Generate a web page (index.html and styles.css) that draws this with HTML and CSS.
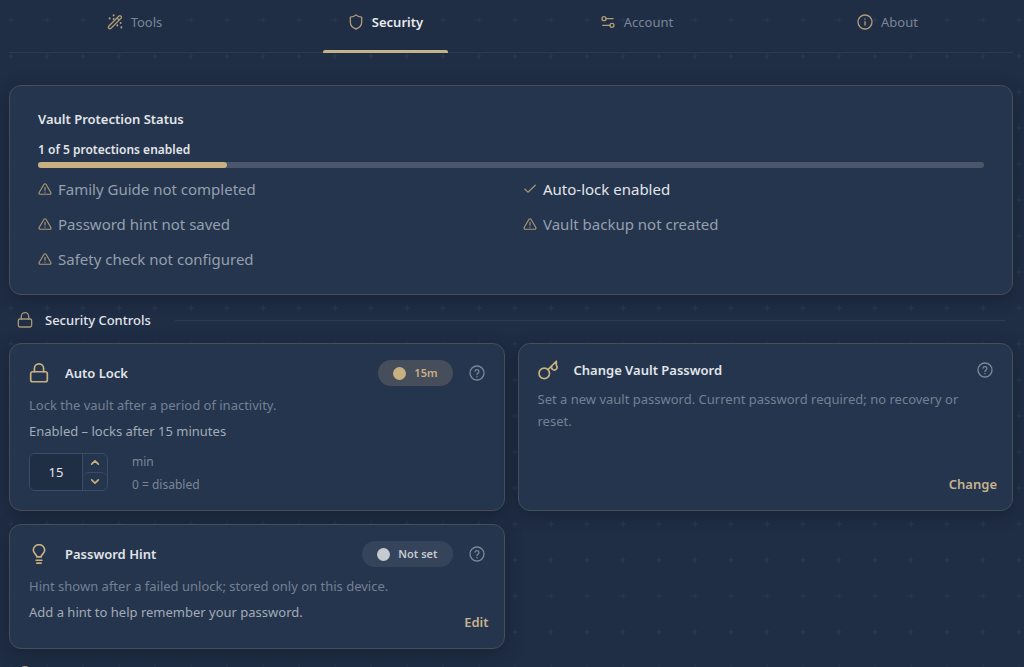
FILE: index.html
```
<!doctype html>
<html lang="en">
<head>
<title>Security</title>
<meta charset="utf-8">
<meta name="viewport" content="width=device-width, initial-scale=1.0">
<link rel="stylesheet" href="styles.css">
</head>
<body>

<!-- Shared icons -->
<svg class="sprite" aria-hidden="true">
    <symbol id="i-warn" viewBox="0 0 24 24"><path d="M10.3 3.9 2 18a2 2 0 0 0 1.7 3h16.6a2 2 0 0 0 1.7-3L13.7 3.9a2 2 0 0 0-3.4 0zM12 9v5M12 17.2v.3"/></symbol>
    <symbol id="i-help" viewBox="0 0 24 24"><circle cx="12" cy="12" r="10.5"/><path d="M9 9.2a3 3 0 0 1 5.9.9c0 2-2.9 2.4-2.9 4M12 17.3v.3"/></symbol>
    <symbol id="i-lock" viewBox="0 0 24 24"><rect x="2" y="10.5" width="20" height="12" rx="2.5"/><path d="M6.5 10.5v-4a5.5 5.5 0 0 1 11 0v4"/></symbol>
    <symbol id="i-bulb" viewBox="0 0 24 24"><path d="M9.5 15.5c0-3-4.3-4-4.3-8a6.8 6.8 0 0 1 13.6 0c0 4-4.3 5-4.3 8zM8.5 19.5h7M9.5 23h5"/></symbol>
</svg>

<nav class="tabs">
    <a class="tab" href="#tools">
        <svg class="icon" viewBox="0 0 24 24"><path d="M2.5 18.5 18 3a2.3 2.3 0 0 1 3.2 3.2L5.7 21.7a2.3 2.3 0 0 1-3.2-3.2zM15 6l3.2 3.2"/><path class="dots" d="M10 2v.1M4 6.5v.1M10 7.500v.1M20.500 13.500v.1M15.500 17v.1M21.500 20v.1"/></svg>
        Tools
    </a>
    <a class="tab active" href="#security">
        <svg class="icon" viewBox="0 0 24 24"><path d="M12 1.500c2.500 2 5.300 3 8.500 3.200V12c0 5.500-3.500 8.800-8.500 10.500C7 20.800 3.500 17.500 3.500 12V4.700C6.700 4.500 9.500 3.500 12 1.500z"/></svg>
        Security
    </a>
    <a class="tab" href="#account">
        <svg class="icon" viewBox="0 0 24 24"><circle cx="6" cy="7" r="3"/><path d="M9 7h10.500M4 17h11"/><circle cx="18" cy="17" r="3"/></svg>
        Account
    </a>
    <a class="tab" href="#about">
        <svg class="icon" viewBox="0 0 24 24"><circle cx="12" cy="12" r="10.500"/><path d="M12 11.500v5M12 7.500v.3"/></svg>
        About
    </a>
</nav>

<main id="security">

    <!-- Status overview -->
    <section class="card status">
        <h2>Vault Protection Status</h2>
        <p class="count">1 of 5 protections enabled</p>
        <div class="bar"><div class="fill" style="width:20%"></div></div>
        <ul class="checks">
            <li><svg class="icon"><use href="#i-warn"/></svg>Family Guide not completed</li>
            <li class="done"><svg class="icon" viewBox="0 0 24 24"><path d="M3 12l5.500 5.500L21 5.500"/></svg>Auto-lock enabled</li>
            <li><svg class="icon"><use href="#i-warn"/></svg>Password hint not saved</li>
            <li><svg class="icon"><use href="#i-warn"/></svg>Vault backup not created</li>
            <li><svg class="icon"><use href="#i-warn"/></svg>Safety check not configured</li>
        </ul>
    </section>

    <div class="heading">
        <svg class="icon"><use href="#i-lock"/></svg>
        <h2>Security Controls</h2>
    </div>

    <div class="grid">
        <section class="card control">
            <header>
                <svg class="icon"><use href="#i-lock"/></svg>
                <h3>Auto Lock</h3>
                <span class="badge on">15m</span>
                <button class="help" aria-label="Help"><svg class="icon"><use href="#i-help"/></svg></button>
            </header>
            <p class="desc">Lock the vault after a period of inactivity.</p>
            <p class="state">Enabled – locks after 15 minutes</p>
            <div class="timer">
                <div class="stepper">
                    <input id="minutes" type="number" value="15" min="0">
                    <div class="steps">
                        <button aria-label="More"><svg class="icon" viewBox="0 0 12 8"><path d="M2 6l4-4 4 4"/></svg></button>
                        <button aria-label="Less"><svg class="icon" viewBox="0 0 12 8"><path d="M2 2l4 4 4-4"/></svg></button>
                    </div>
                </div>
                <label for="minutes">min<small>0 = disabled</small></label>
            </div>
        </section>

        <section class="card control">
            <header>
                <svg class="icon" viewBox="0 0 24 24"><circle cx="7.500" cy="16" r="6.300"/><path d="M12 11.500 22 1.500v5a3.300 3.300 0 1 1-5.500 1"/></svg>
                <h3>Change Vault Password</h3>
                <button class="help" aria-label="Help"><svg class="icon"><use href="#i-help"/></svg></button>
            </header>
            <p class="desc">Set a new vault password. Current password required; no recovery or reset.</p>
            <button class="action">Change</button>
        </section>

        <section class="card control">
            <header>
                <svg class="icon"><use href="#i-bulb"/></svg>
                <h3>Password Hint</h3>
                <span class="badge">Not set</span>
                <button class="help" aria-label="Help"><svg class="icon"><use href="#i-help"/></svg></button>
            </header>
            <p class="desc">Hint shown after a failed unlock; stored only on this device.</p>
            <div class="row">
                <p class="state">Add a hint to help remember your password.</p>
                <button class="action">Edit</button>
            </div>
        </section>
    </div>

    <div class="heading">
        <svg class="icon"><use href="#i-bulb"/></svg>
    </div>

</main>
</body>
</html>
```

FILE: styles.css
```
* {
    margin: 0;
    padding: 0;
    box-sizing: border-box;
}

body {
    padding: 0 11px 0 9px;
    font-family: "Noto Sans", "Open Sans", sans-serif;
    font-size: 13px;
    line-height: 20px;
    color: #e2e5e9;
    /* faint grid of plus signs */
    background-color: #1f2d45;
    background-image:
        radial-gradient(ellipse 5px 1px at 11px 20px, #2a3b54, transparent),
        radial-gradient(ellipse 1px 5px at 11px 20px, #2a3b54, transparent);
    background-size: 36px 36px;
    overflow-x: hidden;
}
button, input {
    font: inherit;
    color: inherit;
    background: none;
    border: 0;
}
button {
    cursor: pointer;
}
h2, h3 {
    font-size: 13px;
    font-weight: 600;
}
.sprite {
    display: none;
}
.icon {
    flex: none;
    display: block;
    width: 16px;
    height: 16px;
    fill: none;
    stroke: #c9b083;
    stroke-width: 2;
    stroke-linecap: round;
    stroke-linejoin: round;
    overflow: visible;
}

/* tabs */
.tabs {
    display: grid;
    grid-template-columns: repeat(4, 1fr);
    border-bottom: 1px solid #2d3b52;
}
.tab {
    position: relative;
    display: flex;
    justify-content: center;
    align-items: center;
    gap: 8px;
    padding: 12px 0 20px;
    color: #7b8698;
    text-decoration: none;
}
.tab .icon {
    opacity: 0.85;
}
.tab .dots {
    stroke-width: 3;
}
.tab.active {
    color: #e9eaec;
    font-weight: 600;
}
.tab.active::after {
    content: '';
    position: absolute;
    left: 25%;
    bottom: -1px;
    width: 50%;
    height: 3px;
    border-radius: 2px 2px 0 0;
    background: #c4b288;
}

/* cards */
.card {
    border: 1px solid #454e5b;
    border-radius: 12px;
    background: #25354d;
    box-shadow: 0 4px 16px rgba(20, 28, 40, 0.6);
}
.status {
    margin-top: 32px;
    padding: 23px 28px;
}
.count {
    margin-top: 11px;
    font-size: 12px;
    font-weight: 600;
}
.bar {
    height: 6px;
    margin-top: 2px;
    border-radius: 3px;
    background: #4b566a;
}
.fill {
    height: 100%;
    border-radius: 3px;
    background: #c9b083;
}
.checks {
    display: grid;
    grid-template-columns: 1fr 1fr;
    gap: 11px 24px;
    margin-top: 9px;
    font-size: 15px;
    line-height: 24px;
    list-style: none;
    color: #959fae;
}
.checks li {
    display: flex;
    align-items: center;
    gap: 6px;
}
.checks .icon {
    width: 14px;
    height: 14px;
    opacity: 0.8;
}
.checks .done {
    color: #e2e5e9;
}

.heading {
    display: flex;
    align-items: center;
    gap: 12px;
    min-height: 20px;
    margin: 15px 8px 13px;
}
.heading .icon {
    opacity: 0.8;
}
.heading h2 {
    font-weight: 500;
}
.heading h2::after {
    content: none;
}
.heading:has(h2)::after {
    content: '';
    flex: 1;
    height: 1px;
    margin-left: 12px;
    background: #2d3b52;
}

.grid {
    display: grid;
    grid-template-columns: 1fr 1fr;
    gap: 13px;
}
.control {
    display: flex;
    flex-direction: column;
    padding: 16px 15px 16px 19px;
}
.control header {
    display: flex;
    align-items: center;
    gap: 16px;
    margin-bottom: 8px;
}
.control header .icon {
    width: 20px;
    height: 20px;
}
.control h3 {
    flex: 1;
}
.control .help .icon {
    width: 16px;
    height: 16px;
    stroke: #7b8698;
}
.help {
    margin-right: 4px;
}
.badge {
    display: flex;
    align-items: center;
    gap: 8px;
    padding: 3px 15px;
    border-radius: 13px;
    background: #35445b;
    color: #c6cad1;
    font-size: 11px;
    font-weight: 600;
}
.badge::before {
    content: '';
    width: 13px;
    height: 13px;
    border-radius: 50%;
    background: currentColor;
}
.badge.on {
    background: #464d5b;
    color: #c9b083;
}
.desc {
    margin-right: 8px;
    line-height: 22px;
    color: #748094;
}
.state {
    margin-top: 4px;
    line-height: 22px;
    color: #a3abb8;
}
.action {
    align-self: flex-end;
    margin-top: auto;
    color: #c6b48e;
    font-weight: 600;
}
.row {
    display: flex;
    justify-content: space-between;
}
.row .action {
    margin-top: 15px;
}

/* minutes stepper */
.timer {
    display: flex;
    gap: 24px;
    margin-top: 11px;
}
.stepper {
    display: flex;
    height: 38px;
    border: 1px solid #3c4d63;
    border-radius: 6px;
    overflow: hidden;
}
.stepper input {
    width: 52px;
    text-align: center;
    background: #202e45;
    appearance: textfield;
}
.stepper input::-webkit-inner-spin-button {
    appearance: none;
}
.steps {
    display: grid;
    width: 25px;
    border-left: 1px solid #3c4d63;
}
.steps button {
    display: grid;
    place-items: center;
}
.steps button + button {
    border-top: 1px solid #3c4d63;
    border-radius: 6px 6px 0 0;
}
.steps .icon {
    width: 10px;
    height: 7px;
}
.timer label {
    font-size: 12px;
    line-height: 18px;
    color: #7b8698;
}
.timer small {
    display: block;
    margin-top: 5px;
    font-size: 12px;
}
```
